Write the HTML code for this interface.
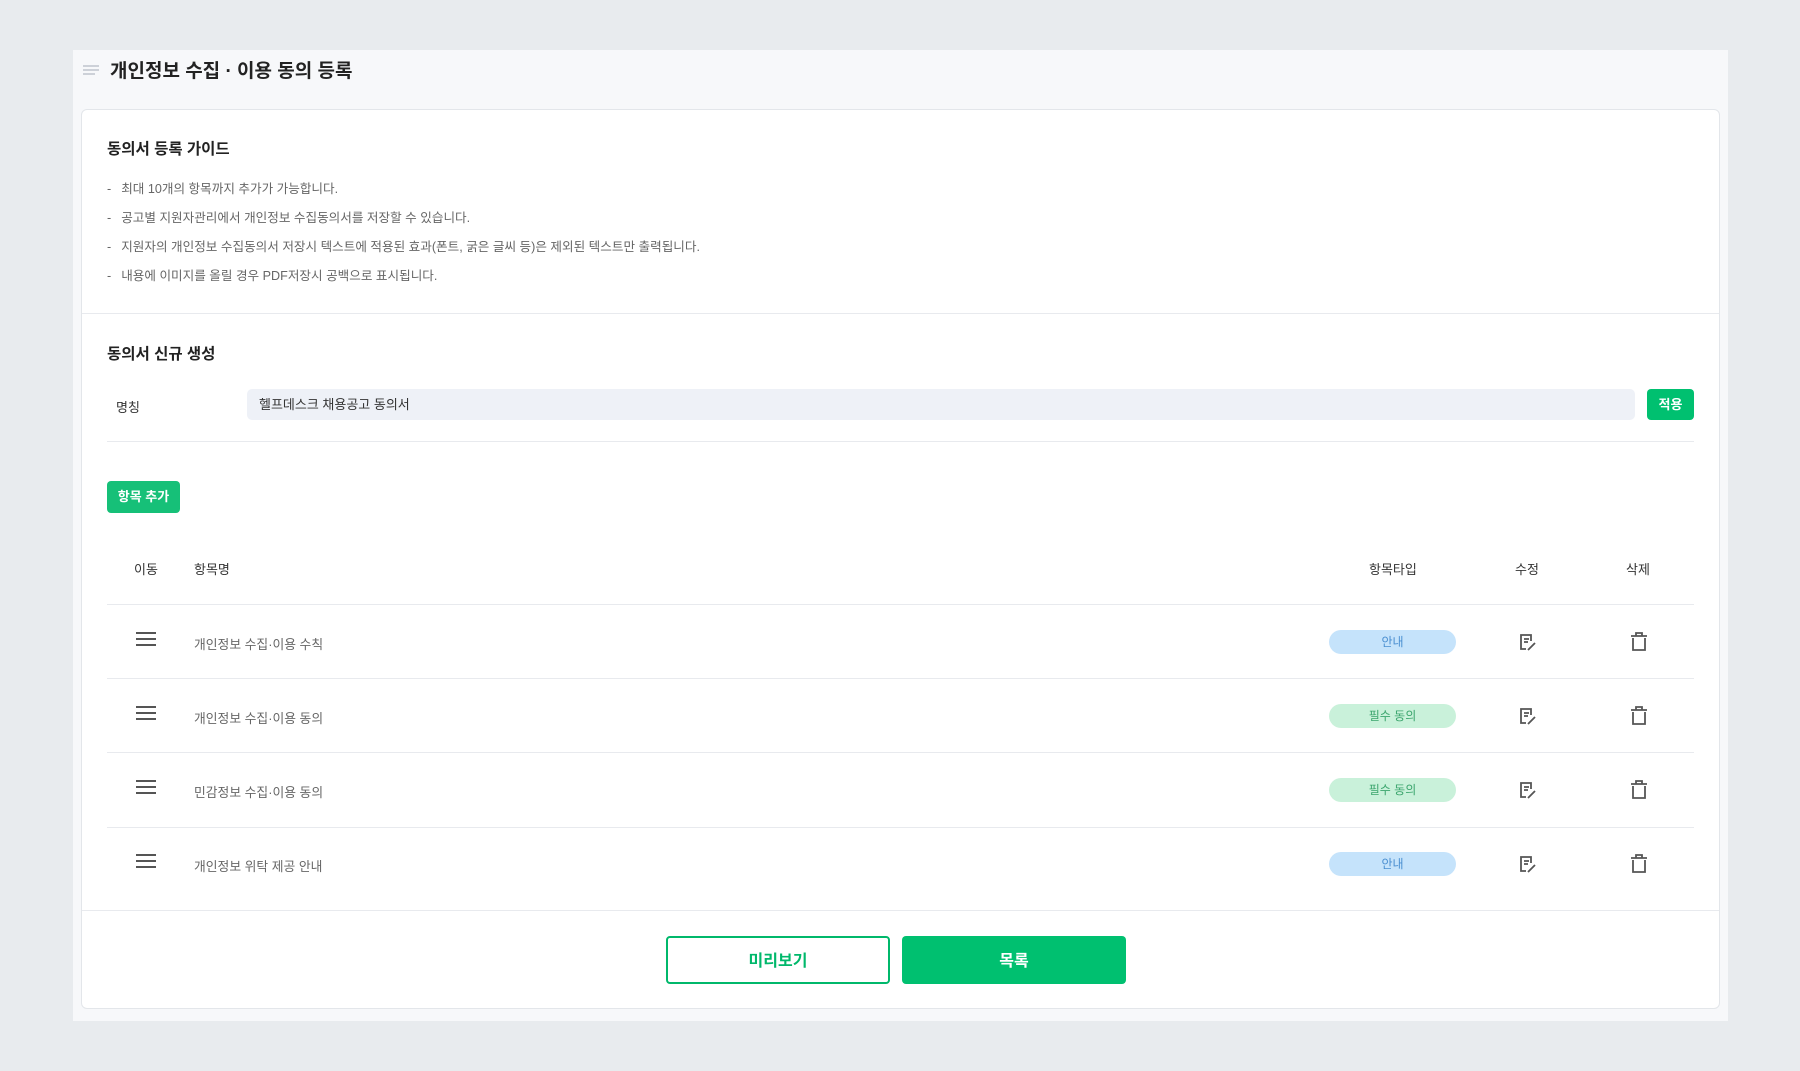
<!DOCTYPE html>
<html><head><meta charset="utf-8"><style>
*{margin:0;padding:0;box-sizing:border-box}
body{width:1800px;height:1071px;background:#e8ebee;font-family:"Liberation Sans","Noto Sans CJK KR",sans-serif;position:relative;overflow:hidden;color:#222}
.a{position:absolute}
.panel{left:73px;top:50px;width:1655px;height:971px;background:#f7f8fa}
.card{left:81px;top:109px;width:1639px;height:900px;background:#fff;border:1px solid #e3e6ea;border-radius:6px}
.h{font-weight:bold;font-size:15.5px;color:#222}
.b{font-size:12.6px;color:#666;left:107px}
.b span{margin-right:10px}
.hr{height:1px;background:#e8eaee}
.th{font-size:13px;color:#333;top:559px}
.row{font-size:12.8px;color:#666;left:194px}
.badge{left:1329px;width:127px;height:24px;border-radius:12px;font-size:12px;text-align:center;line-height:24px}
.info{background:#c5e3fb;color:#4a8fd1}
.req{background:#c9f1da;color:#3ba56d}
.ham{left:136px;width:20px;height:14px;border-top:2px solid #555;border-bottom:2px solid #555}
.ham:after{content:"";position:absolute;left:0;right:0;top:4px;height:2px;background:#555}
</style></head><body>
<div class="a panel"></div>
<svg class="a" style="left:82px;top:64px" width="18" height="12"><path d="M1 2h16M1 6h16M1 10h12" stroke="#bfc4cc" stroke-width="1.6"/></svg>
<div class="a" style="left:110px;top:56px;font-size:19px;font-weight:bold;color:#222">개인정보 수집 · 이용 동의 등록</div>
<div class="a card"></div>
<div class="a h" style="left:107px;top:137px">동의서 등록 가이드</div>
<div class="a b" style="top:178px"><span>-</span>최대 10개의 항목까지 추가가 가능합니다.</div>
<div class="a b" style="top:207px"><span>-</span>공고별 지원자관리에서 개인정보 수집동의서를 저장할 수 있습니다.</div>
<div class="a b" style="top:236px"><span>-</span>지원자의 개인정보 수집동의서 저장시 텍스트에 적용된 효과(폰트, 굵은 글씨 등)은 제외된 텍스트만 출력됩니다.</div>
<div class="a b" style="top:265px"><span>-</span>내용에 이미지를 올릴 경우 PDF저장시 공백으로 표시됩니다.</div>
<div class="a hr" style="left:82px;top:313px;width:1637px"></div>
<div class="a h" style="left:107px;top:342px">동의서 신규 생성</div>
<div class="a" style="left:116px;top:397px;font-size:13px;color:#333">명칭</div>
<div class="a" style="left:247px;top:389px;width:1388px;height:31px;background:#eef1f7;border-radius:5px;font-size:13px;color:#333;line-height:31px;padding-left:12px">헬프데스크 채용공고 동의서</div>
<div class="a" style="left:1647px;top:389px;width:47px;height:31px;background:#00c070;border-radius:4px;color:#fff;font-size:13px;font-weight:bold;text-align:center;line-height:31px">적용</div>
<div class="a hr" style="left:107px;top:441px;width:1587px"></div>
<div class="a" style="left:107px;top:481px;width:73px;height:32px;background:#16c078;border-radius:4px;color:#fff;font-size:13px;font-weight:bold;text-align:center;line-height:32px">항목 추가</div>
<div class="a th" style="left:134px">이동</div>
<div class="a th" style="left:194px">항목명</div>
<div class="a th" style="left:1369px">항목타입</div>
<div class="a th" style="left:1515px">수정</div>
<div class="a th" style="left:1626px">삭제</div>
<div class="a hr" style="left:107px;top:604px;width:1587px"></div>
<div class="a hr" style="left:107px;top:678px;width:1587px"></div>
<div class="a hr" style="left:107px;top:752px;width:1587px"></div>
<div class="a hr" style="left:107px;top:827px;width:1587px"></div>

<div class="a ham" style="top:632px"></div>
<div class="a row" style="top:634px">개인정보 수집·이용 수칙</div>
<div class="a badge info" style="top:630px">안내</div>
<div class="a ham" style="top:706px"></div>
<div class="a row" style="top:708px">개인정보 수집·이용 동의</div>
<div class="a badge req" style="top:704px">필수 동의</div>
<div class="a ham" style="top:780px"></div>
<div class="a row" style="top:782px">민감정보 수집·이용 동의</div>
<div class="a badge req" style="top:778px">필수 동의</div>
<div class="a ham" style="top:854px"></div>
<div class="a row" style="top:856px">개인정보 위탁 제공 안내</div>
<div class="a badge info" style="top:852px">안내</div>

<svg class="a" style="left:1518px;top:632px" width="20" height="20"><path d="M13 9V3H3v14h5M6 7h5M6 10h4M10 18l7-7" stroke="#555" stroke-width="1.8" fill="none"/></svg>
<svg class="a" style="left:1518px;top:706px" width="20" height="20"><path d="M13 9V3H3v14h5M6 7h5M6 10h4M10 18l7-7" stroke="#555" stroke-width="1.8" fill="none"/></svg>
<svg class="a" style="left:1518px;top:780px" width="20" height="20"><path d="M13 9V3H3v14h5M6 7h5M6 10h4M10 18l7-7" stroke="#555" stroke-width="1.8" fill="none"/></svg>
<svg class="a" style="left:1518px;top:854px" width="20" height="20"><path d="M13 9V3H3v14h5M6 7h5M6 10h4M10 18l7-7" stroke="#555" stroke-width="1.8" fill="none"/></svg>

<svg class="a" style="left:1630px;top:632px" width="18" height="20"><path d="M1 4h16M6 4V1h6v3M3 6v12h12V6" stroke="#555" stroke-width="1.8" fill="none"/></svg>
<svg class="a" style="left:1630px;top:706px" width="18" height="20"><path d="M1 4h16M6 4V1h6v3M3 6v12h12V6" stroke="#555" stroke-width="1.8" fill="none"/></svg>
<svg class="a" style="left:1630px;top:780px" width="18" height="20"><path d="M1 4h16M6 4V1h6v3M3 6v12h12V6" stroke="#555" stroke-width="1.8" fill="none"/></svg>
<svg class="a" style="left:1630px;top:854px" width="18" height="20"><path d="M1 4h16M6 4V1h6v3M3 6v12h12V6" stroke="#555" stroke-width="1.8" fill="none"/></svg>

<div class="a hr" style="left:82px;top:910px;width:1637px"></div>
<div class="a" style="left:666px;top:936px;width:224px;height:48px;border:2px solid #00b86b;border-radius:4px;background:#fff;color:#00b86b;font-size:16px;font-weight:bold;text-align:center;line-height:48px">미리보기</div>
<div class="a" style="left:902px;top:936px;width:224px;height:48px;background:#00c070;border-radius:4px;color:#fff;font-size:16px;font-weight:bold;text-align:center;line-height:52px">목록</div>
</body></html>
